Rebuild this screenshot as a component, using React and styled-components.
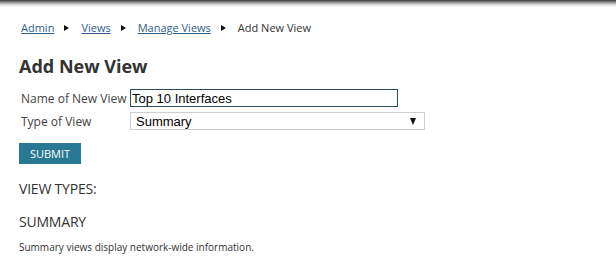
import React from 'react';
import styled, { createGlobalStyle } from 'styled-components';

const GlobalStyle = createGlobalStyle`
  html, body {
    margin: 0;
    padding: 0;
    background: #fff;
  }
  body {
    font-family: "Open Sans", "Liberation Sans", sans-serif;
    color: #333;
  }
`;

const Page = styled.div`
  position: relative;
  width: 616px;
  height: 273px;
  overflow: hidden;
  padding: 0 19px;
  box-sizing: border-box;

  &::before {
    content: '';
    position: absolute;
    left: 0;
    right: 0;
    top: 0;
    height: 7px;
    background: linear-gradient(to bottom, #3a3a3a 0%, #8a8a8a 30%, #d8d8d8 65%, #fff 100%);
  }
`;

const Crumbs = styled.nav`
  display: flex;
  align-items: center;
  padding: 19px 0 0 2px;
  height: 18px;
  font-size: 11px;
  line-height: 18px;
`;

const Crumb = styled.a`
  color: #2e5e8c;
  text-decoration: underline;
  cursor: pointer;
`;

const Current = styled.span`
  color: #333;
`;

const Sep = styled.span`
  display: inline-block;
  width: 0;
  height: 0;
  border-top: 3.5px solid transparent;
  border-bottom: 3.5px solid transparent;
  border-left: 5px solid #111;
  margin: 0 12px 0 10px;
`;

const Title = styled.h1`
  margin: 17px 0 0;
  font-size: 18px;
  font-weight: 700;
  line-height: 24px;
  color: #333;
`;

const Form = styled.form`
  margin-top: 11px;
  padding-left: 2px;
`;

const Row = styled.div`
  display: flex;
  align-items: center;
  height: 18px;
  margin-bottom: 5px;
`;

const Label = styled.label`
  width: 109px;
  flex: none;
  font-size: 12px;
  color: #444;
  white-space: nowrap;
`;

const TextInput = styled.input`
  box-sizing: border-box;
  width: 268px;
  height: 18px;
  border: 1px solid #2e4b5e;
  padding: 0 1px;
  font-family: "Liberation Sans", Arial, sans-serif;
  font-size: 13px;
  color: #000;
  outline: none;
  margin: 0;
`;

const SelectBox = styled.div`
  box-sizing: border-box;
  width: 295px;
  height: 18px;
  border: 1px solid #cfcfcf;
  display: flex;
  align-items: center;
  justify-content: space-between;
  padding: 0 8px 0 5px;
  font-family: "Liberation Sans", Arial, sans-serif;
  font-size: 13px;
  color: #000;
`;

const Arrow = styled.span`
  width: 0;
  height: 0;
  border-left: 3.5px solid transparent;
  border-right: 3.5px solid transparent;
  border-top: 7px solid #111;
`;

const Submit = styled.button`
  display: block;
  margin: 13px 0 0 -2px;
  height: 21px;
  width: 62px;
  padding: 0;
  border: none;
  background: #287793;
  color: #fff;
  font-family: "Open Sans", "Liberation Sans", sans-serif;
  font-size: 11px;
  line-height: 21px;
  cursor: pointer;
`;

const Heading = styled.h2`
  margin: ${p => p.$top}px 0 0;
  font-size: 14px;
  font-weight: 400;
  line-height: 20px;
  color: #333;
  letter-spacing: -0.2px;
`;

const Note = styled.p`
  margin: 8px 0 0;
  font-size: 10px;
  line-height: 14px;
  color: #333;
`;

export default function App() {
  return (
    <>
      <GlobalStyle />
      <Page>
        <Crumbs>
          <Crumb>Admin</Crumb>
          <Sep />
          <Crumb>Views</Crumb>
          <Sep />
          <Crumb>Manage Views</Crumb>
          <Sep />
          <Current>Add New View</Current>
        </Crumbs>
        <Title>Add New View</Title>
        <Form onSubmit={e => e.preventDefault()}>
          <Row>
            <Label>Name of New View</Label>
            <TextInput defaultValue="Top 10 Interfaces" />
          </Row>
          <Row>
            <Label>Type of View</Label>
            <SelectBox>
              Summary
              <Arrow />
            </SelectBox>
          </Row>
          <Submit type="submit">SUBMIT</Submit>
        </Form>
        <Heading $top={15}>VIEW TYPES:</Heading>
        <Heading $top={13}>SUMMARY</Heading>
        <Note>Summary views display network-wide information.</Note>
      </Page>
    </>
  );
}
